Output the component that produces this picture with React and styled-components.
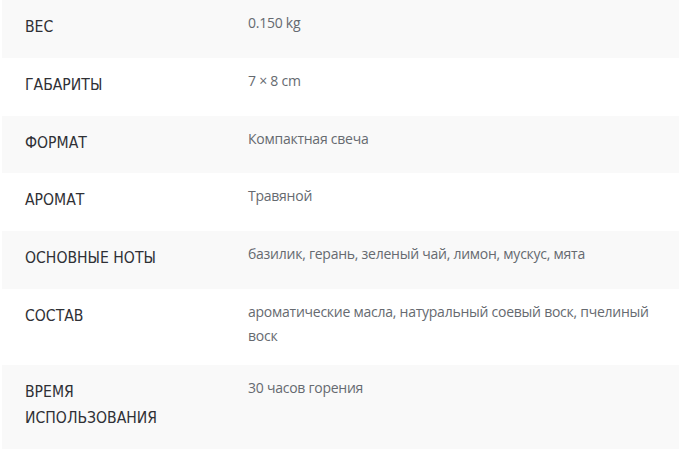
import React from 'react';
import styled, { createGlobalStyle } from 'styled-components';

const GlobalStyle = createGlobalStyle`
    body{
        margin: 0;
        background: #fff;
        font-family: "Open Sans", "Noto Sans", sans-serif;
    }
`

const Table = styled.div`
    margin-left: 2px;
    display: flex;
    flex-direction: column;
`

const Row = styled.div`
    display: grid;
    grid-template-columns: 223px 1fr;
    background-color: ${(p) => (p.$shaded ? '#f9f9f9' : '#fff')};
`

const Label = styled.div`
    padding: 14px 20px 17.6px 23px;
    font-family: "DejaVu Sans Condensed", "Open Sans", sans-serif;
    font-size: 15.6px;
    line-height: 26.2px;
    color: #2f3035;
    text-transform: uppercase;
`

const Value = styled.div`
    padding: 11px 20px 17px 23px;
    font-size: 14px;
    letter-spacing: -0.25px;
    line-height: 24px;
    color: #666a70;
`

const attributes = [
    { name: 'Вес', value: '0.150 kg' },
    { name: 'Габариты', value: '7 × 8 cm' },
    { name: 'Формат', value: 'Компактная свеча' },
    { name: 'Аромат', value: 'Травяной' },
    { name: 'Основные ноты', value: 'базилик, герань, зеленый чай, лимон, мускус, мята' },
    { name: 'Состав', value: 'ароматические масла, натуральный соевый воск, пчелиный воск' },
    { name: 'Время использования', value: '30 часов горения' },
];

const App = () => {
    return (
        <>
            <GlobalStyle />
            <Table>
                {attributes.map((item, i) => (
                    <Row key={item.name} $shaded={i % 2 === 0}>
                        <Label>{item.name}</Label>
                        <Value>{item.value}</Value>
                    </Row>
                ))}
            </Table>
        </>
    );
};

export default App;
